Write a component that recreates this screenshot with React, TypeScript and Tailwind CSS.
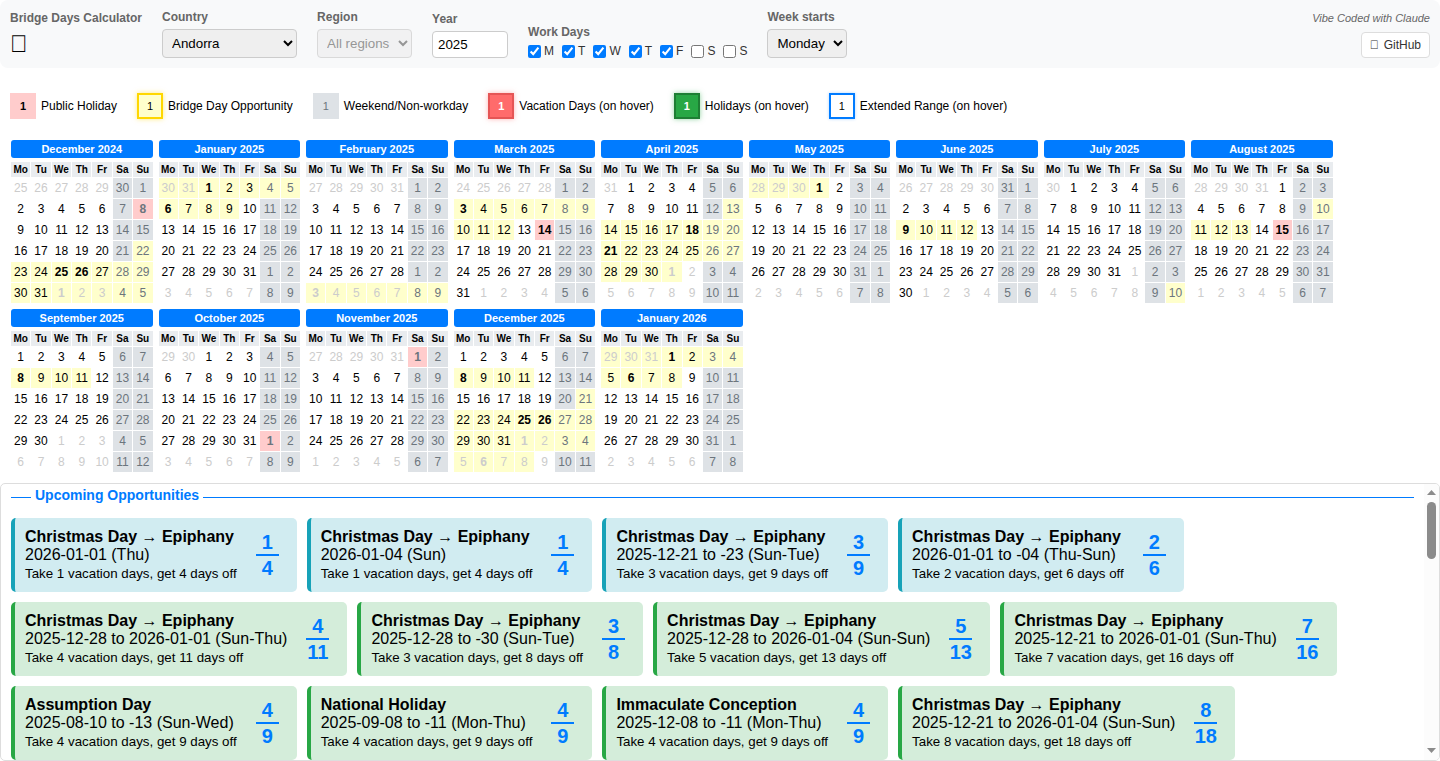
import { useState } from 'react'

type Kind = 'info' | 'success'

type Opportunity = {
  title: string
  dates: string
  vacation: number
  off: number
  kind: Kind
}

const MONTH_NAMES = [
  'January', 'February', 'March', 'April', 'May', 'June',
  'July', 'August', 'September', 'October', 'November', 'December',
]

const WEEKDAYS = ['Mo', 'Tu', 'We', 'Th', 'Fr', 'Sa', 'Su']

// private use codepoint, drawn as an empty box when no icon font covers it
const ICON = '\ue000'

const HOLIDAYS = new Set([
  '2024-12-08', '2024-12-25', '2024-12-26',
  '2025-01-01', '2025-01-06', '2025-03-03', '2025-03-14', '2025-04-18',
  '2025-04-21', '2025-05-01', '2025-06-09', '2025-08-15', '2025-09-08',
  '2025-11-01', '2025-12-08', '2025-12-25', '2025-12-26',
  '2026-01-01', '2026-01-06',
])

const BRIDGES = [
  ['2024-12-22', '2025-01-09'],
  ['2025-03-03', '2025-03-12'],
  ['2025-04-13', '2025-05-01'],
  ['2025-06-09', '2025-06-12'],
  ['2025-08-10', '2025-08-13'],
  ['2025-09-08', '2025-09-11'],
  ['2025-12-08', '2025-12-11'],
  ['2025-12-21', '2026-01-08'],
]

const OPPORTUNITIES: Opportunity[] = [
  { title: 'Christmas Day → Epiphany', dates: '2026-01-01 (Thu)', vacation: 1, off: 4, kind: 'info' },
  { title: 'Christmas Day → Epiphany', dates: '2026-01-04 (Sun)', vacation: 1, off: 4, kind: 'info' },
  { title: 'Christmas Day → Epiphany', dates: '2025-12-21 to -23 (Sun-Tue)', vacation: 3, off: 9, kind: 'info' },
  { title: 'Christmas Day → Epiphany', dates: '2026-01-01 to -04 (Thu-Sun)', vacation: 2, off: 6, kind: 'info' },
  { title: 'Christmas Day → Epiphany', dates: '2025-12-28 to 2026-01-01 (Sun-Thu)', vacation: 4, off: 11, kind: 'success' },
  { title: 'Christmas Day → Epiphany', dates: '2025-12-28 to -30 (Sun-Tue)', vacation: 3, off: 8, kind: 'success' },
  { title: 'Christmas Day → Epiphany', dates: '2025-12-28 to 2026-01-04 (Sun-Sun)', vacation: 5, off: 13, kind: 'success' },
  { title: 'Christmas Day → Epiphany', dates: '2025-12-21 to 2026-01-01 (Sun-Thu)', vacation: 7, off: 16, kind: 'success' },
  { title: 'Assumption Day', dates: '2025-08-10 to -13 (Sun-Wed)', vacation: 4, off: 9, kind: 'success' },
  { title: 'National Holiday', dates: '2025-09-08 to -11 (Mon-Thu)', vacation: 4, off: 9, kind: 'success' },
  { title: 'Immaculate Conception', dates: '2025-12-08 to -11 (Mon-Thu)', vacation: 4, off: 9, kind: 'success' },
  { title: 'Christmas Day → Epiphany', dates: '2025-12-21 to 2026-01-04 (Sun-Sun)', vacation: 8, off: 18, kind: 'success' },
]

const LEGEND = [
  { label: 'Public Holiday', swatch: 'bg-[#ffcccc] font-bold' },
  { label: 'Bridge Day Opportunity', swatch: 'bg-[#ffffcc] border-2 border-[#ffd700] shadow-[0_0_5px_rgba(255,215,0,0.5)]' },
  { label: 'Weekend/Non-workday', swatch: 'bg-[#dee2e6] text-[#6c757d]' },
  { label: 'Vacation Days (on hover)', swatch: 'bg-[#ff6b6b] border-2 border-[#e55555] text-white font-bold shadow-[0_0_5px_rgba(255,107,107,0.5)]' },
  { label: 'Holidays (on hover)', swatch: 'bg-[#28a745] border-2 border-[#1e7e34] text-white font-bold shadow-[0_0_5px_rgba(40,167,69,0.5)]' },
  { label: 'Extended Range (on hover)', swatch: 'bg-white border-2 border-[#007bff] shadow-[0_0_3px_rgba(0,123,255,0.3)]' },
]

const WORK_DAYS = [
  { id: 'mon', letter: 'M' },
  { id: 'tue', letter: 'T' },
  { id: 'wed', letter: 'W' },
  { id: 'thu', letter: 'T' },
  { id: 'fri', letter: 'F' },
  { id: 'sat', letter: 'S' },
  { id: 'sun', letter: 'S' },
]

const labelClass = 'text-[12px] font-bold text-[#666666]'
const selectClass = 'h-[29px] rounded-[4px] border border-[#cccccc] bg-[#efefef] p-[5px] [font-size:smaller]'

function toKey(d: Date) {
  const month = String(d.getMonth() + 1).padStart(2, '0')
  const day = String(d.getDate()).padStart(2, '0')
  return `${d.getFullYear()}-${month}-${day}`
}

function monthWeeks(year: number, month: number) {
  const offset = (new Date(year, month, 1).getDay() + 6) % 7
  return Array.from({ length: 6 }, (_, week) =>
    Array.from({ length: 7 }, (_, day) => new Date(year, month, 1 - offset + week * 7 + day)),
  )
}

function dayClass(d: Date, month: number) {
  const key = toKey(d)
  const holiday = HOLIDAYS.has(key)
  const bridge = BRIDGES.some(([from, to]) => key >= from && key <= to)
  const weekend = d.getDay() === 0 || d.getDay() === 6

  let bg = ''
  if (bridge) bg = 'bg-[#ffffcc]'
  else if (holiday) bg = 'bg-[#ffcccc]'
  else if (weekend) bg = 'bg-[#dee2e6]'

  let color = 'text-black'
  if (weekend) color = 'text-[#6c757d]'
  else if (d.getMonth() !== month) color = 'text-[#cccccc]'

  return `h-5 px-[3px] text-center ${bg} ${color} ${holiday ? 'font-bold' : ''}`
}

function Month({ year, month }: { year: number; month: number }) {
  const title = `${MONTH_NAMES[month]} ${year}`
  return (
    <section>
      <h3 className="mx-px mt-px mb-[3px] h-[18px] rounded-[3px] bg-[#007bff] text-center text-[11px] leading-[18px] font-bold text-white">
        {title}
      </h3>
      <table className="border-separate border-spacing-px text-[12px]" aria-label={title}>
        <thead>
          <tr>
            {WEEKDAYS.map(name => (
              <th key={name} className="h-[15px] bg-[#e9ecef] text-[10px] leading-[15px] font-bold">
                {name}
              </th>
            ))}
          </tr>
        </thead>
        <tbody>
          {monthWeeks(year, month).map(week => (
            <tr key={toKey(week[0])}>
              {week.map(d => (
                <td key={toKey(d)} className={dayClass(d, month)}>
                  {d.getDate()}
                </td>
              ))}
            </tr>
          ))}
        </tbody>
      </table>
    </section>
  )
}

function OpportunityCard({ item }: { item: Opportunity }) {
  const tone = item.kind === 'info' ? 'bg-[#d1ecf1] border-[#17a2b8]' : 'bg-[#d4edda] border-[#28a745]'
  return (
    <article className={`flex items-center gap-[19px] rounded-[5px] border-l-4 py-[10px] pr-[18px] pl-[10px] ${tone}`}>
      <div className="text-[16px] leading-[18px]">
        <h4 className="font-bold">{item.title}</h4>
        <p>{item.dates}</p>
        <p className="mt-[2px] mb-px [font-size:smaller] leading-[15px]">
          Take {item.vacation} vacation days, get {item.off} days off
        </p>
      </div>
      <div className="w-[23px] text-center text-[20px] leading-6 font-bold text-[#007bff]">
        <div className="border-b-2 border-[#007bff]">{item.vacation}</div>
        <div>{item.off}</div>
      </div>
    </article>
  )
}

function Scrollbar() {
  return (
    <div className="flex w-[15px] flex-col items-center bg-[#fcfcfc] pt-[6px] pb-[7px]" aria-hidden="true">
      <svg width="9" height="5" viewBox="0 0 9 5" fill="#8b8b8b">
        <path d="M4.5 0L9 5H0z" />
      </svg>
      <div className="mt-[7px] h-[57px] w-[9px] rounded-full bg-[#8b8b8b]" />
      <svg className="mt-auto" width="9" height="5" viewBox="0 0 9 5" fill="#8b8b8b">
        <path d="M0 0h9L4.5 5z" />
      </svg>
    </div>
  )
}

export default function App() {
  const [year, setYear] = useState('2025')
  const [workDays, setWorkDays] = useState(['mon', 'tue', 'wed', 'thu', 'fri'])

  function toggleDay(id: string) {
    setWorkDays(days => (days.includes(id) ? days.filter(d => d !== id) : [...days, id]))
  }

  const months = Array.from({ length: 14 }, (_, i) => new Date(2024, 11 + i, 1))

  return (
    <div className="flex h-screen flex-col bg-white font-['Liberation_Sans',Arial,sans-serif] leading-[normal] text-black">
      <header className="flex items-end gap-5 rounded-lg bg-[#f8f9fa] p-[10px]">
        <div className="flex flex-col gap-1">
          <h1 className="text-[12px] leading-4 font-bold text-[#666666]">Bridge Days Calculator</h1>
          <span className="text-[24px] leading-7">{ICON}</span>
        </div>
        <div className="flex flex-col gap-[5px]">
          <label htmlFor="country" className={labelClass}>Country</label>
          <select id="country" className={`w-[135px] ${selectClass}`}>
            <option>Andorra</option>
          </select>
        </div>
        <div className="flex flex-col gap-[5px]">
          <label htmlFor="region" className={labelClass}>Region</label>
          <select id="region" disabled className={`w-[95px] text-[#6d6d6d] opacity-70 ${selectClass}`}>
            <option>All regions</option>
          </select>
        </div>
        <div className="flex flex-col gap-[5px]">
          <label htmlFor="year" className={labelClass}>Year</label>
          <input
            id="year"
            type="number"
            value={year}
            onChange={e => setYear(e.target.value)}
            className="h-[27px] w-[76px] rounded-[4px] border border-[#cccccc] bg-white p-[5px] [font-size:smaller]"
          />
        </div>
        <fieldset className="flex flex-col text-[12px]">
          <legend className="mb-[5px] font-bold text-[#666666]">Work Days</legend>
          <div className="flex gap-2">
            {WORK_DAYS.map(({ id, letter }) => (
              <label key={id} className="flex items-center gap-[3px] text-[#333333]">
                <input
                  type="checkbox"
                  checked={workDays.includes(id)}
                  onChange={() => toggleDay(id)}
                  className="size-[13px] accent-[#007bff]"
                />
                {letter}
              </label>
            ))}
          </div>
        </fieldset>
        <div className="flex flex-col gap-[5px]">
          <label htmlFor="week-start" className={labelClass}>Week starts</label>
          <select id="week-start" className={`w-20 ${selectClass}`}>
            <option>Monday</option>
          </select>
        </div>
        <div className="ml-auto flex flex-col items-end gap-2">
          <span className="text-[11px] text-[#666666] italic">Vibe Coded with Claude</span>
          <a
            href="#"
            className="flex h-[26px] items-center gap-[5px] rounded-[4px] border border-[#dddddd] bg-white px-2 text-[12px] text-[#333333]"
          >
            <span>{ICON}</span>
            GitHub
          </a>
        </div>
      </header>

      <div className="mt-[25px] flex flex-wrap gap-5 px-[10px] text-[12px]">
        {LEGEND.map(({ label, swatch }) => (
          <div key={label} className="flex items-center gap-[5px]">
            <span className={`flex size-[26px] items-center justify-center text-[11px] ${swatch}`}>1</span>
            {label}
          </div>
        ))}
      </div>

      <main className="mt-5 flex flex-wrap gap-1 px-[10px]">
        {months.map(m => (
          <Month key={toKey(m)} year={m.getFullYear()} month={m.getMonth()} />
        ))}
      </main>

      <section className="mt-[10px] flex min-h-0 flex-1 overflow-hidden rounded-[5px] border border-[#dddddd]">
        <div className="min-w-0 flex-1 overflow-y-auto px-[10px] pt-[3px] pb-[10px]">
          <div className="mb-[15px] flex items-center gap-1">
            <span className="mt-1 h-px w-5 bg-[#007bff]" />
            <h2 className="text-[14px] leading-4 font-bold text-[#007bff]">Upcoming Opportunities</h2>
            <span className="mt-1 h-px flex-1 bg-[#007bff]" />
          </div>
          <div className="flex flex-wrap gap-[10px]">
            {OPPORTUNITIES.map(item => (
              <OpportunityCard key={item.title + item.dates} item={item} />
            ))}
          </div>
        </div>
        <Scrollbar />
      </section>
    </div>
  )
}
